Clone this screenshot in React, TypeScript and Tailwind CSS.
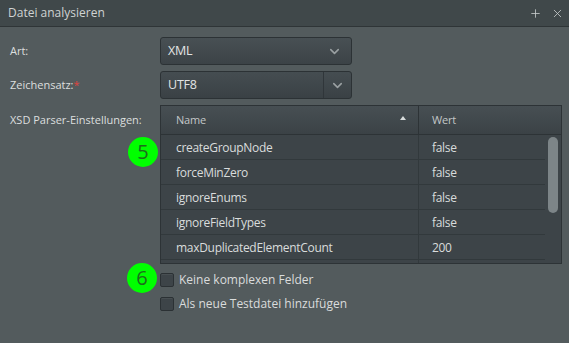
import { ChevronDown, Plus, X } from "lucide-react";

const params = [
  { name: "createGroupNode", value: "false" },
  { name: "forceMinZero", value: "false" },
  { name: "ignoreEnums", value: "false" },
  { name: "ignoreFieldTypes", value: "false" },
  { name: "maxDuplicatedElementCount", value: "200" },
  { name: "", value: "" },
];

function Marker({ n, className }: { n: string; className: string }) {
  return (
    <div
      className={`absolute w-[30px] h-[30px] rounded-full bg-[#00ff00] flex items-center justify-center text-[20px] text-[#1d6b1d] leading-none ${className}`}
    >
      {n}
    </div>
  );
}

function Checkbox({ label }: { label: string }) {
  return (
    <label className="flex items-center h-[20px]">
      <span className="w-[14px] h-[14px] rounded-[2px] bg-[#3d4448] border border-[#2b3134] shadow-[inset_0_1px_0_rgba(255,255,255,0.06)]" />
      <span className="ml-[5px] text-[12px] text-[#dadcdc]">{label}</span>
    </label>
  );
}

export default function App() {
  return (
    <div className="relative w-[569px] h-[343px] bg-[#535b5d] font-['Open_Sans',sans-serif] overflow-hidden">
      <div className="h-[27px] bg-[#40484a] border-b border-[#2f3537] flex items-center pl-[8px] pr-[5px]">
        <span className="text-[12px] text-[#cfd3d3]">Datei analysieren</span>
        <div className="ml-auto flex items-center gap-[9px] text-[#c8cccc]">
          <Plus className="h-[13px] w-[13px]" strokeWidth={1.5} />
          <X className="h-[13px] w-[13px]" strokeWidth={1.5} />
        </div>
      </div>

      <div className="pt-[10px] pl-[10px] flex flex-col gap-[6px]">
        <div className="flex items-center">
          <span className="w-[150px] text-[11px] text-[#dcdfdf]">Art:</span>
          <div className="w-[192px] h-[28px] rounded-[3px] border border-[#2c3235] bg-gradient-to-b from-[#485054] to-[#3c4347] flex items-center pl-[7px] pr-[9px]">
            <span className="text-[12.5px] tracking-[-0.2px] text-[#e2e4e4]">XML</span>
            <ChevronDown className="ml-auto h-[15px] w-[15px] text-[#9aa0a2]" strokeWidth={2.5} />
          </div>
        </div>

        <div className="flex items-center">
          <span className="w-[150px] text-[11px] text-[#dcdfdf]">
            Zeichensatz:<span className="text-[#e0443e]">*</span>
          </span>
          <div className="w-[192px] h-[28px] rounded-[3px] border border-[#2c3235] bg-gradient-to-b from-[#454d51] to-[#3a4145] flex items-center">
            <span className="pl-[7px] text-[12.5px] tracking-[-0.2px] text-[#e2e4e4]">UTF8</span>
            <div className="ml-auto h-full w-[28px] border-l border-[#30363a] flex items-center justify-center">
              <ChevronDown className="h-[15px] w-[15px] text-[#9aa0a2]" strokeWidth={2.5} />
            </div>
          </div>
        </div>

        <div className="flex items-start">
          <span className="w-[150px] h-[30px] flex items-center text-[11px] text-[#dcdfdf]">XSD Parser-Einstellungen:</span>
          <div className="w-[402px] border border-[#2d3336] bg-[#3d4448]">
            <div className="flex h-[29px] bg-gradient-to-b from-[#474f53] to-[#3b4246] border-b border-[#2d3336]">
              <div className="w-[258px] flex items-center pl-[15px] pr-[12px] border-r border-[#2d3336]">
                <span className="text-[11px] tracking-[-0.2px] text-[#c3c7c8]">Name</span>
                <span className="ml-auto w-0 h-0 border-l-[3px] border-r-[3px] border-b-[4px] border-l-transparent border-r-transparent border-b-[#d8dcdc] mb-[4px]" />
              </div>
              <div className="flex-1 flex items-center pl-[13px]">
                <span className="text-[11px] tracking-[-0.2px] text-[#c3c7c8]">Wert</span>
              </div>
            </div>
            <div className="relative h-[128px] overflow-hidden">
              <div className="w-[384px]">
                {params.map((p, i) => (
                  <div key={i} className="flex h-[25px] border-b border-[#32393c]">
                    <div className="w-[258px] flex items-center pl-[15px] pt-[2px] border-r border-[#32393c]">
                      <span className="text-[12px] tracking-[-0.3px] text-[#d9dcdc]">{p.name}</span>
                    </div>
                    <div className="flex-1 flex items-center pl-[13px] pt-[2px]">
                      <span className="text-[12px] tracking-[-0.3px] text-[#d9dcdc]">{p.value}</span>
                    </div>
                  </div>
                ))}
              </div>
              <div className="absolute right-[3px] top-[2px] w-[10px] h-[76px] rounded-full bg-[#7d8588]" />
            </div>
          </div>
        </div>

        <div className="pl-[150px] flex flex-col gap-[4px]">
          <Checkbox label="Keine komplexen Felder" />
          <Checkbox label="Als neue Testdatei hinzufügen" />
        </div>
      </div>

      <Marker n="5" className="left-[128px] top-[137px]" />
      <Marker n="6" className="left-[127px] top-[263px]" />
    </div>
  );
}
